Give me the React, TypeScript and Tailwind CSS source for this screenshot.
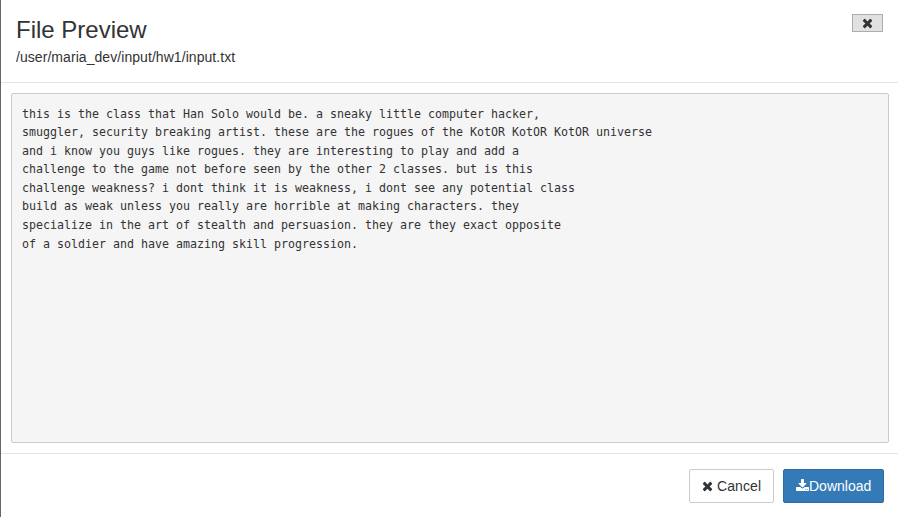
import React from "react";

function TimesIcon() {
  return (
    <svg viewBox="192 0 1408 1792" className="h-[14px] w-[11px] shrink-0 fill-current" aria-hidden="true">
      <path d="M1490 1322q0 40-28 68l-136 136q-28 28-68 28t-68-28l-294-294-294 294q-28 28-68 28t-68-28l-136-136q-28-28-28-68t28-68l294-294-294-294q-28-28-28-68t28-68l136-136q28-28 68-28t68 28l294 294 294-294q28-28 68-28t68 28l136 136q28 28 28 68t-28 68l-294 294 294 294q28 28 28 68z" />
    </svg>
  );
}

function DownloadIcon() {
  return (
    <svg viewBox="64 0 1664 1792" className="h-[14px] w-[13px] shrink-0 fill-current" aria-hidden="true">
      <path d="M1344 1344q0-26-19-45t-45-19-45 19-19 45 19 45 45 19 45-19 19-45zm256 0q0-26-19-45t-45-19-45 19-19 45 19 45 45 19 45-19 19-45zm128-224v320q0 40-28 68t-68 28h-1472q-40 0-68-28t-28-68v-320q0-40 28-68t68-28h465l135 136q58 56 136 56t136-56l136-136h464q40 0 68 28t28 68zm-325-569q17 41-14 70l-448 448q-18 19-45 19t-45-19l-448-448q-31-29-14-70 17-39 59-39h256v-448q0-26 19-45t45-19h256q26 0 45 19t19 45v448h256q42 0 59 39z" />
    </svg>
  );
}

const fileText = `this is the class that Han Solo would be. a sneaky little computer hacker,
smuggler, security breaking artist. these are the rogues of the KotOR KotOR KotOR universe
and i know you guys like rogues. they are interesting to play and add a
challenge to the game not before seen by the other 2 classes. but is this
challenge weakness? i dont think it is weakness, i dont see any potential class
build as weak unless you really are horrible at making characters. they
specialize in the art of stealth and persuasion. they are they exact opposite
of a soldier and have amazing skill progression.`;

export default function App() {
  return (
    <div className="flex h-[517px] w-[898px] flex-col overflow-hidden border-l border-[#666666] bg-white font-['Liberation_Sans',Arial,sans-serif] text-sm text-[#333333]">
      <header className="flex h-[83px] shrink-0 items-start justify-between border-b border-[#e5e5e5] px-[15px]">
        <div className="pt-[17px]">
          <h4 className="text-[24px] leading-[26px]">File Preview</h4>
          <div className="mt-[4px] leading-5 tracking-[0.06px]">/user/maria_dev/input/hw1/input.txt</div>
        </div>
        <button
          aria-label="Close"
          className="mt-[14px] flex h-[18px] w-[31px] items-center justify-center border border-[#adadad] bg-[#e1e1e1]"
        >
          <TimesIcon />
        </button>
      </header>
      <main className="h-[370px] shrink-0 pt-[10px] pr-[9px] pb-[10px] pl-[10px]">
        <pre className="h-full rounded-[2px] border border-[#cccccc] bg-[#f5f5f5] px-[10px] pt-[10.6px] font-['DejaVu_Sans_Mono',monospace] text-[11.63px] leading-[18.58px]">
          {fileText}
        </pre>
      </main>
      <footer className="flex grow items-start justify-end gap-[9px] border-t border-[#e5e5e5] pt-[15px] pr-[14px]">
        <button className="flex h-[34px] w-[85px] items-center gap-[4px] rounded-[2px] border border-[#cccccc] bg-white pl-[12px]">
          <TimesIcon />
          <span className="tracking-[0.1px]">Cancel</span>
        </button>
        <button className="flex h-[34px] w-[101px] items-center rounded-[2px] border border-[#2e6da4] bg-[#337ab7] pl-[12px] text-white">
          <DownloadIcon />
          <span>Download</span>
        </button>
      </footer>
    </div>
  );
}
